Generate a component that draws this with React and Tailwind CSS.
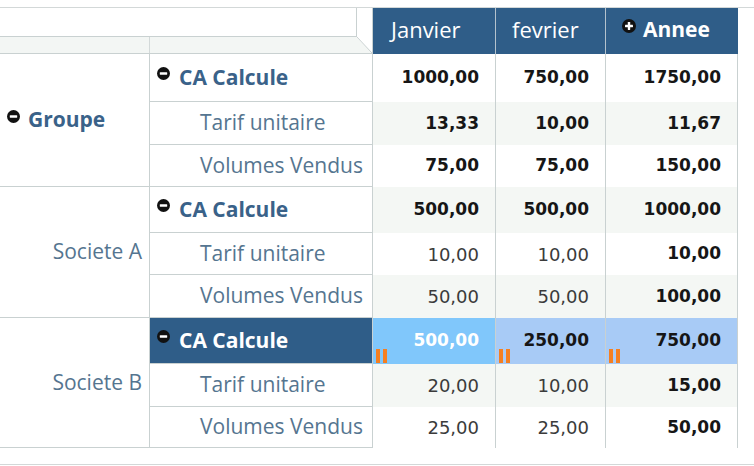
import React from "react";

const LABEL_FONT = { fontFamily: '"Open Sans", "Noto Sans", sans-serif' };
const NUM_FONT = { fontFamily: '"DejaVu Sans", sans-serif' };

function MinusIcon({ className = "" }) {
  return (
    <svg width="13" height="13" viewBox="0 0 13 13" className={"shrink-0 " + className}>
      <circle cx="6.5" cy="6.5" r="6.5" fill="#111" />
      <rect x="2.8" y="5.3" width="7.4" height="2.4" rx="0.4" fill="#fff" />
    </svg>
  );
}

function PlusIcon({ className = "" }) {
  return (
    <svg width="14" height="14" viewBox="0 0 14 14" className={"shrink-0 " + className}>
      <circle cx="7" cy="7" r="7" fill="#111" />
      <rect x="3" y="5.8" width="8" height="2.4" rx="0.4" fill="#fff" />
      <rect x="5.8" y="3" width="2.4" height="8" rx="0.4" fill="#fff" />
    </svg>
  );
}

function Marker() {
  return (
    <div className="absolute left-[3px] bottom-[1px] flex gap-[3px]">
      <div className="w-[4px] h-[14px] bg-[#f57f20]" />
      <div className="w-[4px] h-[14px] bg-[#f57f20]" />
    </div>
  );
}

const sections = [
  {
    group: "Groupe",
    groupBold: true,
    heights: [48, 43, 42],
    rows: [
      { label: "CA Calcule", total: true, vals: ["1000,00", "750,00", "1750,00"], bold: [true, true, true] },
      { label: "Tarif unitaire", vals: ["13,33", "10,00", "11,67"], bold: [true, true, true] },
      { label: "Volumes Vendus", vals: ["75,00", "75,00", "150,00"], bold: [true, true, true] },
    ],
  },
  {
    group: "Societe A",
    heights: [46, 42, 43],
    rows: [
      { label: "CA Calcule", total: true, vals: ["500,00", "500,00", "1000,00"], bold: [true, true, true] },
      { label: "Tarif unitaire", vals: ["10,00", "10,00", "10,00"], bold: [false, false, true] },
      { label: "Volumes Vendus", vals: ["50,00", "50,00", "100,00"], bold: [false, false, true] },
    ],
  },
  {
    group: "Societe B",
    heights: [46, 43, 41],
    rows: [
      { label: "CA Calcule", total: true, selected: true, vals: ["500,00", "250,00", "750,00"], bold: [true, true, true] },
      { label: "Tarif unitaire", vals: ["20,00", "10,00", "15,00"], bold: [false, false, true] },
      { label: "Volumes Vendus", vals: ["25,00", "25,00", "50,00"], bold: [false, false, true] },
    ],
  },
];

const colWidths = ["w-[123px]", "w-[110px]", "w-[132px]"];

export default function App() {
  let rowIndex = 0;
  return (
    <div className="w-[754px] h-[466px] bg-white overflow-hidden pt-[7px]">
      <div className="h-[458px] border-t border-b border-[#d3d8d8] flex flex-col">
        {/* Header */}
        <div className="flex h-[46px]">
          <div className="w-[373px] flex border-r border-[#c9d1d1]">
            <div className="w-[356px] flex flex-col">
              <div className="h-[29px] border-b border-[#c9d1d1] bg-white" />
              <div className="h-[17px] border-b border-[#c9d1d1] bg-[#f3f6f4] flex">
                <div className="w-[150px] border-r border-[#d3d9d9]" />
              </div>
            </div>
            <svg width="16" height="46" viewBox="0 0 16 46" className="block">
              <polygon points="0,29 16,45 0,45" fill="#f3f6f4" />
              <line x1="0.5" y1="0" x2="0.5" y2="29" stroke="#c9d1d1" />
              <line x1="0.5" y1="28.5" x2="16" y2="45" stroke="#c9d1d1" />
              <line x1="0" y1="45.5" x2="16" y2="45.5" stroke="#c9d1d1" />
            </svg>
          </div>
          <div className="flex bg-[#2f5d88] text-white" style={LABEL_FONT}>
            <div className="w-[123px] border-r border-[#b4c2cd] flex items-center pl-[18px] pb-[3px] text-[22px]">
              Janvier
            </div>
            <div className="w-[110px] border-r border-[#b4c2cd] flex items-center pl-[16px] pb-[3px] text-[22px]">
              fevrier
            </div>
            <div className="w-[132px] flex items-center pl-[16px] pb-[2px] gap-[7px] font-bold text-[21px]">
              <PlusIcon className="-mt-[9px]" />
              <span>Annee</span>
            </div>
          </div>
        </div>

        {/* Body */}
        {sections.map((sec, si) => (
          <div key={si} className="flex">
            <div
              className={
                "w-[150px] border-r border-b border-[#c9d1d1] flex items-center text-[21px] " +
                (sec.groupBold
                  ? "justify-start pl-[7px] gap-[8px] font-bold text-[#3a6289]"
                  : "justify-end pr-[7px] text-[#557590]")
              }
              style={LABEL_FONT}
            >
              {sec.groupBold && <MinusIcon className="-mt-[8px]" />}
              <span>{sec.group}</span>
            </div>
            <div className="flex flex-col">
              {sec.rows.map((r, ri) => {
                const idx = rowIndex++;
                const alt = idx % 2 === 1;
                const rowBg = alt ? "bg-[#f4f7f4]" : "bg-white";
                return (
                  <div key={ri} className="flex" style={{ height: sec.heights[ri] }}>
                    <div
                      className={
                        "w-[223px] border-r border-b border-[#c9d1d1] flex items-center text-[21px] whitespace-nowrap " +
                        (r.selected
                          ? "bg-[#2f5d88] text-white font-bold pl-[7px] gap-[9px]"
                          : r.total
                          ? "bg-white text-[#3a6289] font-bold pl-[7px] gap-[9px]"
                          : "bg-white text-[#557590] pl-[50px]")
                      }
                      style={LABEL_FONT}
                    >
                      {r.total && <MinusIcon className="-mt-[8px]" />}
                      <span>{r.label}</span>
                    </div>
                    {r.vals.map((v, vi) => {
                      let bg = rowBg;
                      let color = r.bold[vi]
                        ? "text-[#161616] font-bold text-[17px]"
                        : "text-[#3b3b3b] text-[18px]";
                      if (r.selected) {
                        bg = vi === 0 ? "bg-[#80c7fb]" : "bg-[#a8cbf6]";
                        if (vi === 0) color = "text-white font-bold text-[17px]";
                      }
                      return (
                        <div
                          key={vi}
                          className={
                            "relative border-r border-[#c9d1d1] flex items-center justify-end pr-[16px] " +
                            colWidths[vi] + " " + bg + " " + color
                          }
                          style={NUM_FONT}
                        >
                          {r.selected && <Marker />}
                          {v}
                        </div>
                      );
                    })}
                  </div>
                );
              })}
            </div>
          </div>
        ))}
      </div>
    </div>
  );
}
